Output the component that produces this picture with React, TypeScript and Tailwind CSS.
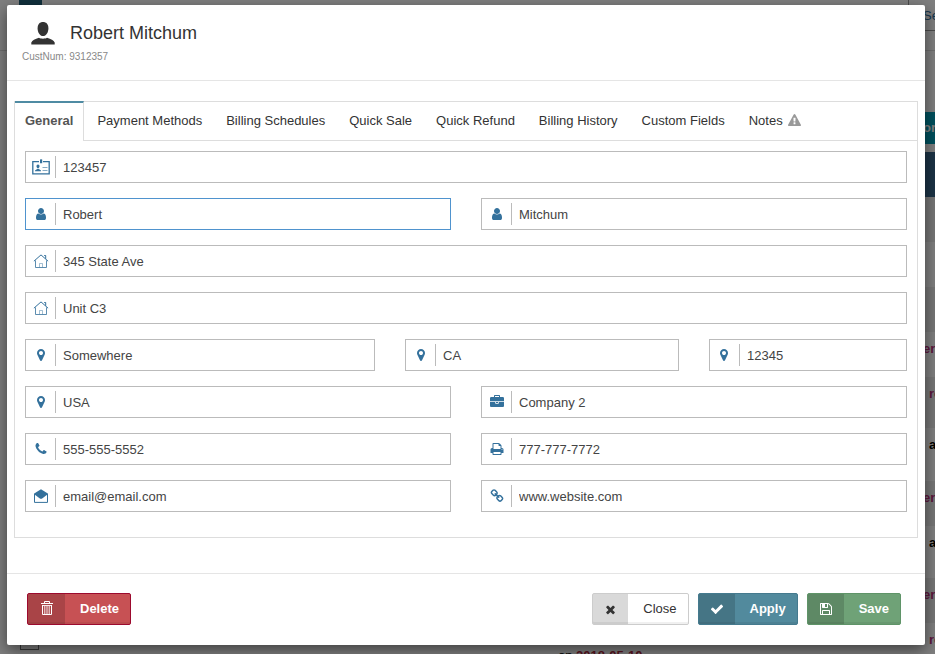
import { useState } from 'react';
import type { ReactNode } from 'react';

// 1792-unit glyphs, all drawn on the same square
const glyphs = {
    user: 'M1536 1399q0 109-62.5 187t-150.5 78h-854q-88 0-150.5-78t-62.5-187q0-85 8.5-160.5t31.5-152 58.5-131 94-89 134.5-34.5q131 128 313 128t313-128q76 0 134.5 34.5t94 89 58.5 131 31.5 152 8.5 160.5zm-256-887q0 159-112.5 271.5t-271.5 112.5-271.5-112.5-112.5-271.5 112.5-271.5 271.5-112.5 271.5 112.5 112.5 271.5z',
    pin: 'M1152 640q0-106-75-181t-181-75-181 75-75 181 75 181 181 75 181-75 75-181zm256 0q0 109-33 179l-364 774q-16 33-47.5 52t-67.5 19-67.5-19-46.5-52l-365-774q-33-70-33-179 0-212 150-362t362-150 362 150 150 362z',
    phone: 'M1600 1240q0 27-10 70.5t-21 68.5q-21 50-122 106-94 51-186 51-27 0-53-3.5t-57.5-12.5-47-14.5-55.5-20.5-49-18q-98-35-175-83-127-79-264-216t-216-264q-48-77-83-175-3-9-18-49t-20.5-55.5-14.5-47-12.5-57.5-3.5-53q0-92 51-186 56-101 106-122 25-11 68.5-21t70.5-10q14 0 21 3 18 6 53 76 11 19 30 54t35 63.5 31 53.5q3 4 17.5 25t21.5 35.5 7 28.5q0 20-28.5 50t-62 55-62 53-28.5 46q0 9 5 22.5t8.5 20.5 14 24 11.5 19q76 137 174 235t235 174q2 1 19 11.5t24 14 20.5 8.5 22.5 5q18 0 46-28.5t53-62 55-62 50-28.5q14 0 28.5 7t35.5 21.5 25 17.5q25 15 53.5 31t63.5 35 54 30q70 35 76 53 3 7 3 21z',
    briefcase: 'M640 256h512v-128h-512v128zm1152 640v480q0 66-47 113t-113 47h-1472q-66 0-113-47t-47-113v-480h672v160q0 26 19 45t45 19h320q26 0 45-19t19-45v-160h672zm-768 0v128h-256v-128h256zm768-480v384h-1792v-384q0-66 47-113t113-47h352v-160q0-40 28-68t68-28h576q40 0 68 28t28 68v160h352q66 0 113 47t47 113z',
    print: 'M448 1536h896v-256h-896v256zm0-640h896v-384h-160q-40 0-68-28t-28-68v-160h-640v640zm1152 64q0-26-19-45t-45-19-45 19-19 45 19 45 45 19 45-19 19-45zm128 0v416q0 13-9.5 22.5t-22.5 9.5h-224v160q0 40-28 68t-68 28h-960q-40 0-68-28t-28-68v-160h-224q-13 0-22.5-9.5t-9.5-22.5v-416q0-79 56.5-135.5t135.5-56.5h64v-544q0-40 28-68t68-28h672q40 0 88 20t76 48l152 152q28 28 48 76t20 88v256h64q79 0 135.5 56.5t56.5 135.5z',
    link: 'M1520 1216q0-40-28-68l-208-208q-28-28-68-28-42 0-72 32 3 3 19 18.5t21.5 21.5 15 19 13 25.5 3.5 27.5q0 40-28 68t-68 28q-15 0-27.5-3.5t-25.5-13-19-15-21.5-21.5-18.5-19q-33 31-33 73 0 40 28 68l206 207q27 27 68 27 40 0 68-26l147-146q28-28 28-67zm-703-705q0-40-28-68l-206-207q-28-28-68-28-39 0-68 27l-147 146q-28 28-28 67 0 40 28 68l208 208q27 27 68 27 42 0 72-31-3-3-19-18.5t-21.5-21.5-15-19-13-25.5-3.5-27.5q0-40 28-68t68-28q15 0 27.5 3.5t25.5 13 19 15 21.5 21.5 18.5 19q33-31 33-73zm895 705q0 120-85 203l-147 146q-83 83-203 83-121 0-204-85l-206-207q-83-83-83-203 0-123 88-209l-88-88q-86 88-208 88-120 0-204-84l-208-208q-84-84-84-204t85-203l147-146q83-83 203-83 121 0 204 85l206 207q83 83 83 203 0 123-88 209l88 88q86-88 208-88 120 0 204 84l208 208q84 84 84 204z',
    warning: 'M1024 1375v-190q0-14-9.5-23.5t-22.5-9.5h-192q-13 0-22.5 9.5t-9.5 23.5v190q0 14 9.5 23.5t22.5 9.5h192q13 0 22.5-9.5t9.5-23.5zm-2-374l18-459q0-12-10-19-13-11-24-11h-220q-11 0-24 11-10 7-10 21l17 457q0 10 10 16.5t24 6.5h185q14 0 23.5-6.5t10.5-16.5zm-14-934l768 1408q35 63-2 126-17 29-46.5 46t-63.5 17h-1536q-34 0-63.5-17t-46.5-46q-37-63-2-126l768-1408q17-31 47-49t65-18 65 18 47 49z',
    times: 'M1490 1322q0 40-28 68l-136 136q-28 28-68 28t-68-28l-294-294-294 294q-28 28-68 28t-68-28l-136-136q-28-28-28-68t28-68l294-294-294-294q-28-28-28-68t28-68l136-136q28-28 68-28t68 28l294 294 294-294q28-28 68-28t68 28l136 136q28 28 28 68t-28 68l-294 294 294 294q28 28 28 68z',
    check: 'M1671 566q0 40-28 68l-724 724-136 136q-28 28-68 28t-68-28l-136-136-362-362q-28-28-28-68t28-68l136-136q28-28 68-28t68 28l294 295 656-657q28-28 68-28t68 28l136 136q28 28 28 68z',
    save: 'M512 1536h768v-384h-768v384zm896 0h128v-896q0-14-10-38.5t-20-34.5l-281-281q-10-10-34-20t-39-10v416q0 40-28 68t-68 28h-576q-40 0-68-28t-28-68v-416h-128v1280h128v-416q0-40 28-68t68-28h832q40 0 68 28t28 68v416zm-384-928v-320q0-13-9.5-22.5t-22.5-9.5h-192q-13 0-22.5 9.5t-9.5 22.5v320q0 13 9.5 22.5t22.5 9.5h192q13 0 22.5-9.5t9.5-22.5zm640 32v928q0 40-28 68t-68 28h-1344q-40 0-68-28t-28-68v-1344q0-40 28-68t68-28h928q40 0 88 20t76 48l280 280q28 28 48 76t20 88z',
};

function Glyph({ name, className = 'size-3.5' }: { name: keyof typeof glyphs; className?: string }) {
    return (
        <svg viewBox="0 0 1792 1792" className={`${className} shrink-0`} fill="currentColor" aria-hidden="true">
            <path d={glyphs[name]} />
        </svg>
    );
}

function PersonIcon() {
    return (
        <svg viewBox="0 0 24 23" className="h-[23px] w-6 shrink-0" fill="#333" aria-hidden="true">
            <path d="M12 0C8.9 0 6.6 2 6.6 6.2C6.6 10.6 9 14 12 14C15 14 17.4 10.6 17.4 6.2C17.4 2 15.1 0 12 0Z" />
            <path d="M0.3 22.6V20.6C1.2 18.2 4 17.2 8 15.8C9.8 17 14.2 17 16 15.8C20 17.2 22.8 18.2 23.7 20.6V22.6Z" />
        </svg>
    );
}

function IdCardIcon() {
    return (
        <svg viewBox="0 0 18 16" className="h-4 w-[18px]" fill="none" stroke="currentColor" aria-hidden="true">
            <path d="M7 2.6H0.8V14.8H17.2V2.6H11" strokeWidth="1.3" />
            <path d="M8 0.6Q9.1 -0.2 10.2 0.6V4.2H8Z" fill="currentColor" stroke="none" />
            <path d="M6 5.4C4.8 5.4 4.3 6.4 4.5 7.6C4.7 8.7 5.3 9.4 6 9.4C6.7 9.4 7.3 8.7 7.5 7.6C7.7 6.4 7.2 5.4 6 5.4Z" fill="currentColor" stroke="none" />
            <path d="M3 12.3V11.4L5.2 10H6.8L9 11.4V12.3Z" fill="currentColor" stroke="none" />
            <path d="M10.5 8.5H15.5M10.5 11.5H15.5" strokeWidth="1" strokeOpacity="0.6" />
        </svg>
    );
}

function HouseIcon() {
    return (
        <svg viewBox="0 0 16 16" className="size-4" fill="none" stroke="currentColor" aria-hidden="true">
            <path d="M0.9 8.2L8 1.9L15.1 8.2" />
            <path d="M11.2 2.5H12.7V5.8" />
            <path d="M2.5 7.4V14.5H13.5V7.4" strokeOpacity="0.8" />
            <path d="M6.5 14.2V10.5H9.5V14.2" strokeOpacity="0.45" />
        </svg>
    );
}

function MailIcon() {
    return (
        <svg viewBox="0 0 14 14" className="size-3.5" aria-hidden="true">
            <path d="M0.5 4.8V13.4H13.5V4.8" fill="none" stroke="currentColor" />
            <path d="M0.2 4.6L7 0.2L13.8 4.6V5.2L7.8 9.8H6.2L0.2 5.2Z" fill="currentColor" />
        </svg>
    );
}

function TrashIcon() {
    return (
        <svg viewBox="0 0 12 17" className="h-[17px] w-3" fill="none" stroke="currentColor" aria-hidden="true">
            <path d="M3.5 2.2V0.5H8.5V2.2" />
            <path d="M0 2.5H12" />
            <path d="M1.5 4V13.5H10.5V4" />
            <path d="M1.5 4.5H10.5M3.8 5V13M6 5V13M8.2 5V13" strokeWidth="0.9" />
        </svg>
    );
}

interface FieldProps {
    label: string;
    value: string;
    icon: ReactNode;
    active?: boolean;
    type?: string;
}

function Field({ label, value, icon, active = false, type = 'text' }: FieldProps) {
    const [text, setText] = useState(value);

    return (
        <label
            className={`flex h-8 w-full items-center border bg-white ${active ? 'border-[#4f93ce]' : 'border-[#bbb]'}`}
        >
            <span className="flex h-[22px] w-[30px] shrink-0 items-center justify-center border-r border-[#bbb] text-[#34719c]">
                {icon}
            </span>
            <input
                type={type}
                aria-label={label}
                value={text}
                onChange={(e) => setText(e.target.value)}
                className="h-full w-full min-w-0 bg-transparent px-[7px] text-[13px] text-[#444] outline-none"
            />
        </label>
    );
}

interface ActionButtonProps {
    label: string;
    icon: ReactNode;
    colors: string;
    iconWidth?: string;
    bold?: boolean;
}

function ActionButton({ label, icon, colors, iconWidth = 'w-9', bold = true }: ActionButtonProps) {
    return (
        <button
            type="button"
            className={`flex h-8 items-stretch overflow-hidden rounded-xs border text-[13px] shadow-[inset_0_-2px_0_rgba(0,0,0,0.06)] ${colors} ${bold ? 'font-bold' : ''}`}
        >
            <span className={`flex items-center justify-center bg-black/15 ${iconWidth}`}>{icon}</span>
            <span className="flex items-center pr-[11px] pl-[15px]">{label}</span>
        </button>
    );
}

const tabs = [
    'Payment Methods',
    'Billing Schedules',
    'Quick Sale',
    'Quick Refund',
    'Billing History',
    'Custom Fields',
    'Notes',
];

// Status column of the customer list under the dialog
const listRows = [
    { text: '', style: 'h-[45px] bg-[#eee]' },
    { text: '', style: 'h-[45px]' },
    { text: '', style: 'h-[45px] bg-[#eee]' },
    { text: 'er', style: 'h-[45px] text-[#b8327a]' },
    { text: 're', style: 'h-[51px] bg-[#eee] pl-1.5 text-[#b8327a]' },
    { text: 'a', style: 'h-[53px] pl-1.5 text-black' },
    { text: 'er', style: 'h-[45px] bg-[#eee] text-[#b8327a]' },
    { text: 'a', style: 'h-[52px] pl-1.5 text-black' },
    { text: 'er', style: 'h-[45px] bg-[#eee] text-[#b8327a]' },
    { text: 're', style: 'h-[45px] pl-1.5 text-[#b8327a]' },
];

function PageBehind() {
    return (
        <div className="absolute inset-0 flex overflow-hidden bg-white" aria-hidden="true">
            <div className="flex flex-1 flex-col justify-between">
                <div className="h-[51px] border-b border-[#ddd] pl-[19px]">
                    <div className="h-[7px] w-[23px] bg-[#22617a]" />
                </div>
                <div className="flex h-4 items-start pl-5">
                    <div className="h-3 w-[19px] border border-[#777]" />
                    <span className="mt-2.5 ml-[519px] text-[13px] leading-4 whitespace-nowrap text-black">
                        on <span className="font-bold text-[#b02840]">2018-05-10</span>
                    </span>
                </div>
            </div>
            <div className="flex w-[27px] flex-col">
                <div className="h-[31px] shrink-0 border-b border-l border-[#999] pt-2 pl-[14px] text-[13px] leading-4 text-[#2d6c9c]">
                    Se
                </div>
                <div className="h-5 shrink-0 border-b border-[#ddd]" />
                <div className="mt-[61px] flex h-8 shrink-0 items-center bg-[#00a0ba] pl-[15px] text-[13px] font-bold text-white">
                    or
                </div>
                <div className="mt-2 h-[45px] shrink-0 bg-[#38668c]" />
                {listRows.map((row, i) => (
                    <div key={i} className="shrink-0 pl-[15px]">
                        <div className={`pt-[9px] text-[13px] leading-4 font-bold ${row.style}`}>{row.text}</div>
                    </div>
                ))}
            </div>
            <div className="absolute inset-0 bg-black/50" />
        </div>
    );
}

export default function App() {
    const pin = <Glyph name="pin" />;
    const person = <Glyph name="user" />;

    return (
        <div className="relative min-h-screen overflow-hidden pt-[5px] pr-2.5 pb-[9px] pl-[7px] font-['Liberation_Sans',Arial,sans-serif] text-[13px] text-[#333]">
            <PageBehind />

            <div
                role="dialog"
                aria-labelledby="customer-name"
                className="relative rounded-xs bg-white shadow-[0_5px_15px_rgba(0,0,0,0.5)]"
            >
                <header className="border-b border-[#e5e5e5] px-[15px] pt-3.5 pb-4">
                    <div className="flex items-center gap-[15px] pl-[9px]">
                        <PersonIcon />
                        <h1 id="customer-name" className="text-lg leading-7">
                            Robert Mitchum
                        </h1>
                    </div>
                    <p className="mt-0.5 text-[10px] leading-[15px] text-[#888]">CustNum: 9312357</p>
                </header>

                <main className="pt-5 pr-[7px] pb-[35px] pl-[7px]">
                    <div className="border border-[#ddd]">
                        <nav className="-mt-px flex h-10" role="tablist">
                            <button
                                type="button"
                                role="tab"
                                aria-selected="true"
                                className="border-t-2 border-r border-t-[#4f8ba3] border-r-[#ddd] px-2.5 pb-0.5 font-bold text-[#555]"
                            >
                                General
                            </button>
                            <div className="flex flex-1 gap-6 border-b border-[#ddd] pl-[13px]">
                                {tabs.map((tab) => (
                                    <button
                                        key={tab}
                                        type="button"
                                        role="tab"
                                        aria-selected="false"
                                        className="flex items-center gap-[5px] whitespace-nowrap"
                                    >
                                        {tab}
                                        {tab === 'Notes' && (
                                            <span className="text-[#999]">
                                                <Glyph name="warning" className="size-[13px]" />
                                            </span>
                                        )}
                                    </button>
                                ))}
                            </div>
                        </nav>

                        <form className="flex flex-col gap-[15px] px-2.5 pt-2.5 pb-[25px]">
                            <Field label="Customer ID" value="123457" icon={<IdCardIcon />} />
                            <div className="grid grid-cols-2 gap-[30px]">
                                <Field label="First name" value="Robert" icon={person} active />
                                <Field label="Last name" value="Mitchum" icon={person} />
                            </div>
                            <Field label="Address" value="345 State Ave" icon={<HouseIcon />} />
                            <Field label="Address line 2" value="Unit C3" icon={<HouseIcon />} />
                            <div className="-mx-[15px] flex">
                                <div className="w-5/12 px-[15px]">
                                    <Field label="City" value="Somewhere" icon={pin} />
                                </div>
                                <div className="w-4/12 px-[15px]">
                                    <Field label="State" value="CA" icon={pin} />
                                </div>
                                <div className="w-3/12 px-[15px]">
                                    <Field label="Zip" value="12345" icon={pin} />
                                </div>
                            </div>
                            <div className="grid grid-cols-2 gap-x-[30px] gap-y-[15px]">
                                <Field label="Country" value="USA" icon={pin} />
                                <Field label="Company" value="Company 2" icon={<Glyph name="briefcase" />} />
                                <Field label="Phone" value="555-555-5552" icon={<Glyph name="phone" />} type="tel" />
                                <Field label="Fax" value="777-777-7772" icon={<Glyph name="print" />} type="tel" />
                                <Field label="Email" value="email@email.com" icon={<MailIcon />} type="email" />
                                <Field label="Website" value="www.website.com" icon={<Glyph name="link" />} />
                            </div>
                        </form>
                    </div>
                </main>

                <footer className="flex items-center gap-[9px] border-t border-[#e5e5e5] pt-[19px] pr-6 pb-5 pl-5">
                    <div className="flex-1">
                        <ActionButton
                            label="Delete"
                            icon={<TrashIcon />}
                            iconWidth="w-[37px]"
                            colors="border-[#9c0a2e] bg-[#c75154] text-white"
                        />
                    </div>
                    <ActionButton
                        label="Close"
                        icon={<Glyph name="times" className="size-[13px]" />}
                        iconWidth="w-[35px]"
                        colors="border-[#ccc] bg-white text-[#333]"
                        bold={false}
                    />
                    <ActionButton
                        label="Apply"
                        icon={<Glyph name="check" />}
                        colors="border-[#457a8e] bg-[#528a9d] text-white"
                    />
                    <ActionButton
                        label="Save"
                        icon={<Glyph name="save" />}
                        colors="border-[#5f9468] bg-[#6fa277] text-white"
                    />
                </footer>
            </div>
        </div>
    );
}
